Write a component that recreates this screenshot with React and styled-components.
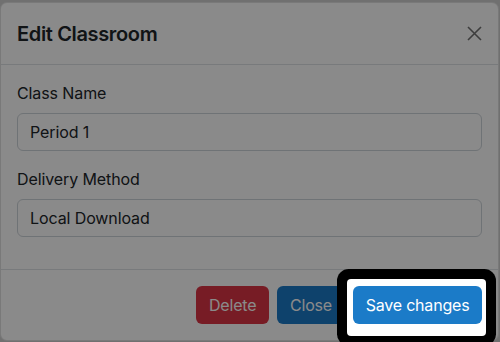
import styled, { createGlobalStyle } from "styled-components";

const GlobalStyle = createGlobalStyle`
  html, body {
    margin: 0;
    padding: 0;
    background: #cfcfcf;
    font-family: Inter, "Noto Sans", "Liberation Sans", sans-serif;
    color: #212529;
  }
  * { box-sizing: border-box; }
`;

const Page = styled.div`
  position: relative;
  width: 500px;
  height: 342px;
  overflow: hidden;
  padding: 2px 0 0 0;
`;

const Backdrop = styled.div`
  position: absolute;
  inset: 0;
  background: rgba(0, 0, 0, 0.46);
  z-index: 1;
  pointer-events: none;
`;

const Dialog = styled.div`
  width: 499px;
  background: #fff;
  border: 1px solid rgba(0, 0, 0, 0.12);
  border-radius: 7px;
  display: flex;
  flex-direction: column;
`;

const Header = styled.div`
  display: flex;
  align-items: center;
  justify-content: space-between;
  padding: 16px;
  height: 62px;
  border-bottom: 1px solid #dee2e6;
`;

const Title = styled.h5`
  margin: 0;
  font-size: 20px;
  font-weight: 600;
  line-height: 30px;
  letter-spacing: -0.35px;
`;

const CloseX = styled.button`
  border: 0;
  background: transparent;
  padding: 0;
  width: 15px;
  height: 15px;
  display: flex;
  opacity: 0.55;
  cursor: pointer;
`;

const Body = styled.div`
  padding: 16px 16px 0 16px;
  display: flex;
  flex-direction: column;
`;

const Field = styled.div`
  display: flex;
  flex-direction: column;
  gap: 8px;
  margin-bottom: 16px;
`;

const Label = styled.label`
  font-size: 16px;
  line-height: 24px;
  letter-spacing: -0.1px;
`;

const Input = styled.div`
  height: 38px;
  border: 1px solid #ced4da;
  border-radius: 6px;
  padding: 0 12px;
  display: flex;
  align-items: center;
  font-size: 16px;
  letter-spacing: -0.1px;
`;

const Footer = styled.div`
  border-top: 1px solid #dee2e6;
  margin-top: 16px;
  padding: 12px;
  display: flex;
  justify-content: flex-end;
`;

const Button = styled.button`
  height: 38px;
  margin: 4px;
  padding: 0 13px;
  border: 0;
  border-radius: 6px;
  font-family: inherit;
  font-size: 16px;
  letter-spacing: -0.2px;
  color: #fff;
  background: ${(p) => p.$bg};
  width: ${(p) => p.$w}px;
`;

const SpotWrap = styled.div`
  position: relative;
  z-index: 2;
  display: flex;
`;

const Spotlight = styled.div`
  position: absolute;
  top: -3px;
  left: -2px;
  right: 0;
  bottom: -8px;
  background: #fff;
  border-radius: 4px;
  box-shadow: 0 0 0 10px #000;
`;

const SaveButton = styled(Button)`
  position: relative;
  padding: 0;
`;

export default function App() {
  return (
    <>
      <GlobalStyle />
      <Page>
        <Dialog>
          <Header>
            <Title>Edit Classroom</Title>
            <CloseX aria-label="Close">
              <svg width="15" height="15" viewBox="0 0 15 15">
                <path d="M1 1 L14 14 M14 1 L1 14" stroke="#000" strokeWidth="1.6" fill="none" />
              </svg>
            </CloseX>
          </Header>
          <Body>
            <Field>
              <Label>Class Name</Label>
              <Input>Period 1</Input>
            </Field>
            <Field>
              <Label>Delivery Method</Label>
              <Input>Local Download</Input>
            </Field>
          </Body>
          <Footer>
            <Button $bg="#dc3545" $w={73}>Delete</Button>
            <Button $bg="#1b7bc8" $w={68}>Close</Button>
            <SpotWrap>
              <Spotlight />
              <SaveButton $bg="#1b7bc8" $w={129}>Save changes</SaveButton>
            </SpotWrap>
          </Footer>
        </Dialog>
        <Backdrop />
      </Page>
    </>
  );
}
